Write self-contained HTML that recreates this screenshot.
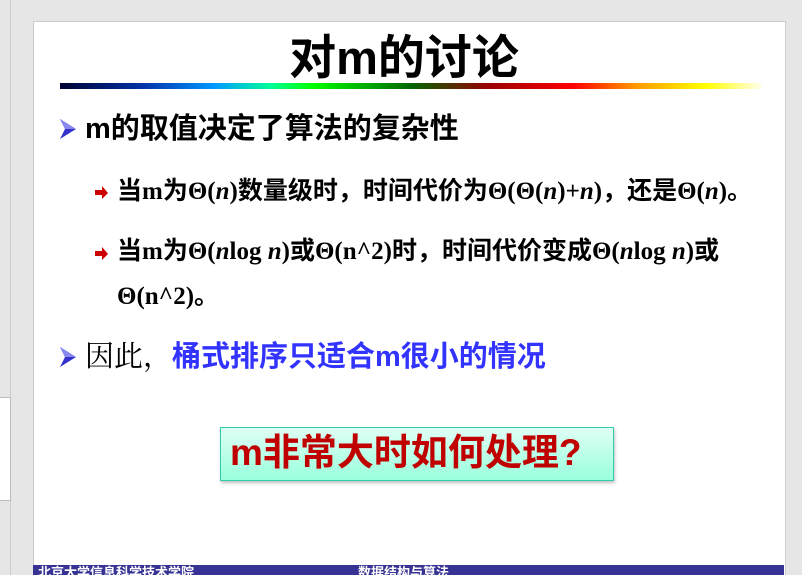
<!DOCTYPE html>
<html><head><meta charset="utf-8"><style>
html,body{margin:0;width:802px;height:575px;overflow:hidden}
body{background:#e6e6e6;position:relative;font-family:"Liberation Sans","Noto Sans CJK SC",sans-serif}
.a{position:absolute}
.slide{left:33px;top:21px;width:751px;height:554px;background:#fff;border:1px solid #ccc;border-bottom:none}
.t{font-weight:bold;white-space:nowrap}
.s{font-family:"Liberation Serif","Noto Sans CJK SC",serif;font-weight:bold;font-size:25px;white-space:nowrap}
</style></head><body>
<div class="a" style="left:10px;top:0;width:1px;height:575px;background:#ccc"></div>
<div class="a" style="left:0;top:397px;width:10px;height:102px;background:#fff;border:1px solid #bbb;border-left:none"></div>
<div class="a slide"></div>
<div class="a t" style="left:0;width:808px;text-align:center;top:29px;font-size:47px;line-height:58px;color:#000">对m的讨论</div>
<div class="a" style="left:60px;top:83px;width:702px;height:6px;background:linear-gradient(90deg,#000033 0%,#0033aa 12%,#0099ff 22%,#00ff99 30%,#00ff00 36%,#006600 50%,#990000 61%,#ff0000 73%,#ff9900 82%,#ffff00 92%,#ffffee 100%)"></div>
<svg class="a" style="left:59px;top:118px" width="18" height="22"><polygon points="1,1 17,11 1,21 6,11" fill="#3333cc"/><polygon points="1,1 17,11 6,11" fill="#8888ee"/></svg>
<div class="a t" style="left:85px;top:111px;font-size:29px;line-height:36px">m的取值决定了算法的复杂性</div>
<svg class="a" style="left:95px;top:186px" width="14" height="14"><path d="M0,4H7V0L13,7L7,13V9H0Z" fill="#cc0000"/></svg>
<div class="a s" style="left:117px;top:177px;line-height:30px">当m为Θ(<i>n</i>)数量级时，时间代价为Θ(Θ(<i>n</i>)+<i>n</i>)，还是Θ(<i>n</i>)。</div>
<svg class="a" style="left:95px;top:247px" width="14" height="14"><path d="M0,4H7V0L13,7L7,13V9H0Z" fill="#cc0000"/></svg>
<div class="a s" style="left:117px;top:237px;line-height:30px">当m为Θ(<i>n</i>log <i>n</i>)或Θ(n^2)时，时间代价变成Θ(<i>n</i>log <i>n</i>)或</div>
<div class="a s" style="left:117px;top:282px;line-height:30px">Θ(n^2)。</div>
<svg class="a" style="left:59px;top:346px" width="18" height="22"><polygon points="1,1 17,11 1,21 6,11" fill="#3333cc"/><polygon points="1,1 17,11 6,11" fill="#8888ee"/></svg>
<div class="a" style="left:85px;top:339px;font-size:29px;line-height:36px;white-space:nowrap;font-family:'Liberation Serif','Noto Serif CJK SC',serif">因此，<b style="color:#3333ff;font-family:'Liberation Sans','Noto Sans CJK SC',sans-serif">桶式排序只适合m很小的情况</b></div>
<div class="a" style="left:220px;top:427px;width:392px;height:52px;border:1px solid #33ccaa;background:linear-gradient(#dffff4,#99ffdd);box-shadow:1px 2px 3px rgba(0,0,0,.25)"></div>
<div class="a t" style="left:230px;top:429px;font-size:37px;line-height:48px;color:#c00000">m非常大时如何处理?</div>
<div class="a" style="left:33px;top:565px;width:751px;height:10px;background:#363394;overflow:hidden;color:#fff;font-size:13px;font-weight:bold;line-height:16px"><span style="position:absolute;left:5px;top:0">北京大学信息科学技术学院</span><span style="position:absolute;left:325px;top:0">数据结构与算法</span></div>
</body></html>
